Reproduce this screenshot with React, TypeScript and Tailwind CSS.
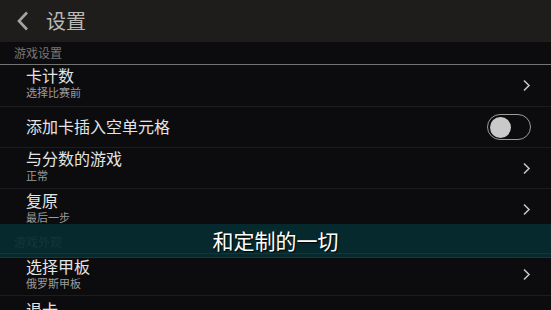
import React from "react";

const font = { fontFamily: '"Noto Sans CJK SC", "Noto Sans", sans-serif' };

const Chevron = () => (
  <svg width="9" height="13" viewBox="0 0 9 13" className="mr-[20px] shrink-0">
    <path d="M2 1.5 L7 6.5 L2 11.5" fill="none" stroke="#c4c4c4" strokeWidth="1.6" />
  </svg>
);

const Toggle = () => (
  <div className="mr-[20px] flex h-[26px] w-[44px] items-center rounded-full border-[1.5px] border-[#9c9c9c] px-[2px]">
    <div className="h-[21px] w-[21px] rounded-full bg-[#c9c9c9]" />
  </div>
);

const Row = ({
  title,
  sub,
  right,
  h,
  pt,
}: {
  title: string;
  sub?: string;
  right?: React.ReactNode;
  h: string;
  pt: string;
}) => (
  <div className={`flex items-center justify-between border-b border-[#1d1d1f] ${h}`}>
    <div className={`flex h-full flex-col pl-[26px] ${pt}`}>
      <div className="text-[16px] leading-[19px] text-[#e4e4e4]">{title}</div>
      {sub && <div className="mt-[1px] text-[11px] leading-[13px] text-[#9c9c9c]">{sub}</div>}
    </div>
    {right}
  </div>
);

const SectionHeader = ({ label, h }: { label: string; h: string }) => (
  <div className={`flex items-center border-b border-[#747472] pl-[14px] text-[12px] text-[#787878] ${h}`}>
    {label}
  </div>
);

export default function App() {
  return (
    <div className="relative h-[310px] w-[551px] overflow-hidden bg-[#0c0c0e]" style={font}>
      <div className="flex h-[42px] items-center bg-[#1e1d1b]">
        <svg width="14" height="20" viewBox="0 0 14 20" className="ml-[16px]">
          <path d="M11 1.5 L3 10 L11 18.5" fill="none" stroke="#a4a4a4" strokeWidth="2.6" />
        </svg>
        <span className="ml-[16px] text-[20px] text-[#b9b9b9]">设置</span>
      </div>
      <SectionHeader label="游戏设置" h="h-[23px]" />
      <Row title="卡计数" sub="选择比赛前" right={<Chevron />} h="h-[42px]" pt="pt-[1px]" />
      <Row title="添加卡插入空单元格" right={<Toggle />} h="h-[41px]" pt="pt-[10px]" />
      <Row title="与分数的游戏" sub="正常" right={<Chevron />} h="h-[41px]" pt="pt-[1px]" />
      <Row title="复原" sub="最后一步" right={<Chevron />} h="h-[42px]" pt="pt-[2px]" />
      <SectionHeader label="游戏外观" h="h-[23px]" />
      <Row title="选择甲板" sub="俄罗斯甲板" right={<Chevron />} h="h-[42px]" pt="pt-[3px]" />
      <Row title="退卡" h="h-[42px]" pt="pt-[4px]" />

      <div className="absolute left-0 right-0 top-[224px] flex h-[34px] items-center justify-center border-b border-[#0d3c40] bg-[#052d31]/[0.88]">
        <span className="text-[21px] text-white [text-shadow:1px_1px_1px_#000]">和定制的一切</span>
      </div>
    </div>
  );
}
